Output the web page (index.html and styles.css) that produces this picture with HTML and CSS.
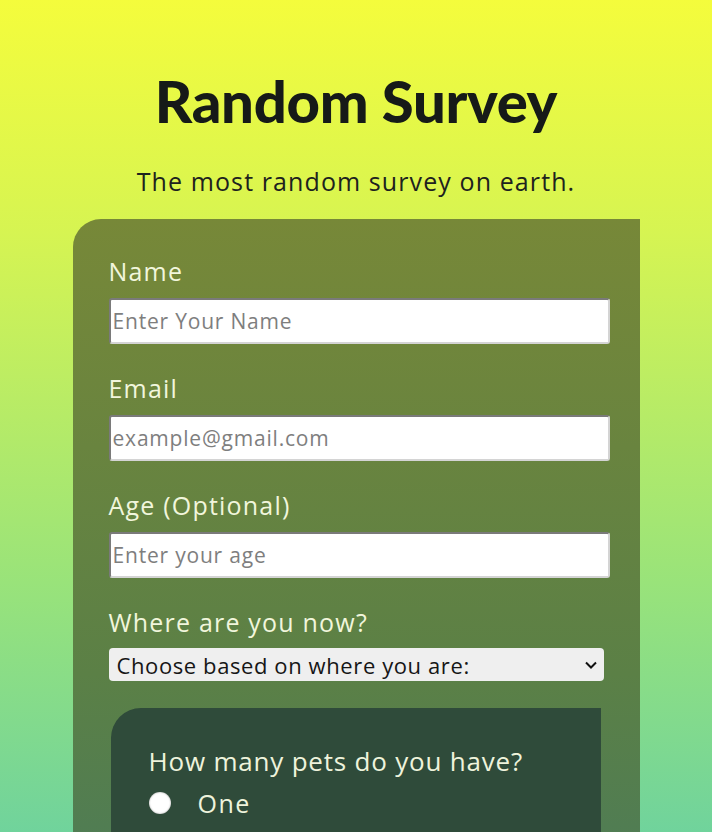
FILE: index.html
```html
<!DOCTYPE html>
<html lang="en">
<head>
<meta charset="utf-8">
<title>Random Survey</title>
<link rel="stylesheet" href="styles.css">
</head>
<body>
<header class="header">
  <h1 class="title">Random Survey</h1>
  <p class="subtitle">The most random survey on earth.</p>
</header>
<form class="card">
  <div class="field">
    <label class="label" for="name">Name</label>
    <input class="input" id="name" type="text" placeholder="Enter Your Name">
  </div>
  <div class="field">
    <label class="label" for="email">Email</label>
    <input class="input" id="email" type="email" placeholder="example@gmail.com">
  </div>
  <div class="field">
    <label class="label" for="age">Age (Optional)</label>
    <input class="input" id="age" type="number" placeholder="Enter your age">
  </div>
  <div class="field field-select">
    <label class="label" for="where">Where are you now?</label>
    <div class="select">
      <span>Choose based on where you are:</span>
      <svg class="chev" width="14" height="10" viewBox="0 0 14 10"><path d="M2 2.5 L7 7.5 L12 2.5" fill="none" stroke="#111" stroke-width="2"/></svg>
    </div>
  </div>
  <div class="inner">
    <p class="question">How many pets do you have?</p>
    <label class="radio"><span class="dot"></span><span>One</span></label>
    <label class="radio"><span class="dot"></span><span>Two</span></label>
    <label class="radio"><span class="dot"></span><span>Three or more</span></label>
  </div>
</form>
</body>
</html>
```
FILE: styles.css
```css
html, body {
  margin: 0;
  padding: 0;
}
body {
  min-height: 100vh;
  background: linear-gradient(180deg, #f4fc3c 0%, #d6f452 28%, #99e37a 70%, #70d39c 100%) fixed;
  font-family: "Open Sans", Lato, sans-serif;
  font-weight: 500;
  color: #1b1f1c;
}
.header {
  padding-top: 66px;
  text-align: center;
}
.title {
  margin: 0;
  font-family: Lato, sans-serif;
  font-size: 58px;
  line-height: 70px;
  font-weight: 900;
  letter-spacing: -0.3px;
  color: #161a18;
}
.subtitle {
  margin: 30px 0 0;
  font-size: 25px;
  line-height: 30px;
  letter-spacing: 1.1px;
  color: #1d221e;
}
.card {
  width: 531px;
  margin: 23px auto 0;
  padding: 39px 0 40px 36px;
  border-radius: 28px 0 0 0;
  background: linear-gradient(180deg, #778838 0%, #5b8046 60%, #477a5e 100%);
}
.field {
  display: flex;
  flex-direction: column;
  margin-bottom: 31px;
}
.label {
  font-size: 25px;
  line-height: 26px;
  letter-spacing: 1.2px;
  color: #f1f6dc;
  margin-bottom: 14px;
}
.input {
  box-sizing: border-box;
  width: 501px;
  height: 46px;
  margin: 0;
  padding: 0 2px;
  border: 2px solid #8c8c8c;
  border-top-color: #7a7a7a;
  border-left-color: #7a7a7a;
  border-right-color: #d4d4d4;
  border-bottom-color: #d4d4d4;
  border-radius: 3px;
  background: #fff;
  font-family: "Open Sans", Lato, sans-serif;
  font-weight: 500;
  font-size: 21px;
  letter-spacing: 0.8px;
  color: #333;
}
.input::placeholder {
  color: #7e7e7e;
}
.field-select {
  margin-bottom: 27px;
}
.field-select .label {
  margin-bottom: 13px;
}
.select {
  box-sizing: border-box;
  width: 495px;
  height: 33px;
  display: flex;
  align-items: center;
  justify-content: space-between;
  padding: 0 6px 0 8px;
  border-radius: 4px;
  background: #efefef;
  font-size: 22px;
  letter-spacing: 0.6px;
  color: #161616;
}
.chev {
  display: block;
}
.inner {
  margin-left: 2px;
  width: 490px;
  box-sizing: border-box;
  padding: 38px 0 30px 38px;
  border-radius: 30px 0 0 0;
  background: #2f4b3a;
  color: #eef3dc;
}
.question {
  margin: 0 0 11px;
  font-size: 26px;
  line-height: 30px;
  letter-spacing: 0.8px;
}
.radio {
  display: flex;
  align-items: center;
  gap: 27px;
  font-size: 25px;
  line-height: 32px;
  letter-spacing: 1.5px;
  margin-bottom: 8px;
}
.dot {
  width: 22px;
  height: 22px;
  border-radius: 50%;
  background: #fff;
  box-shadow: inset 0 0 2px rgba(0,0,0,0.4);
}
```
